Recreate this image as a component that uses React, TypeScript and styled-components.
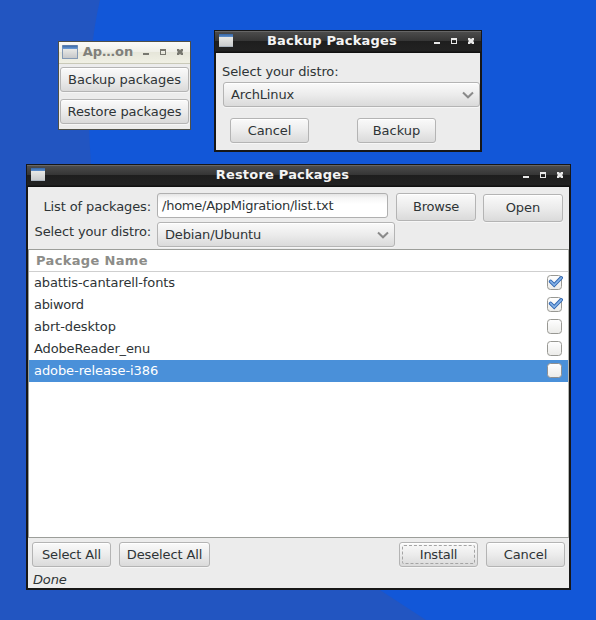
import React from "react";
import styled, { createGlobalStyle, css } from "styled-components";

const Global = createGlobalStyle`
  * { box-sizing: border-box; }
  html, body { margin: 0; padding: 0; }
  body { font-family: "DejaVu Sans", sans-serif; font-size: 13px; color: #2e3436; overflow: hidden; }
`;

const Desktop = styled.main`
  position: relative;
  width: 596px;
  height: 620px;
  overflow: hidden;
  background: #1257d8;
`;

const Wallpaper = styled.svg`
  display: block;
`;

const Window = styled.section<{ $x: number; $y: number; $w: number; $h: number; $light?: boolean }>`
  position: absolute;
  left: ${(p) => p.$x}px;
  top: ${(p) => p.$y}px;
  width: ${(p) => p.$w}px;
  height: ${(p) => p.$h}px;
  display: flex;
  flex-direction: column;
  background: #ececec;
  border: ${(p) => (p.$light ? "1px solid #4f5048" : "2px solid #171717")};
  border-top-width: 1px;
`;

const TitleBar = styled.header<{ $light?: boolean }>`
  display: flex;
  align-items: center;
  flex: none;
  ${(p) =>
    p.$light
      ? css`
          height: 22px;
          padding: 0 7px 1px 3px;
          color: #80807a;
          background: linear-gradient(#fbfbf8, #eeeee6 50%, #e6e6da 50%, #f0f0e4);
          border-bottom: 1px solid #c9c9b8;
        `
      : css`
          height: 22px;
          margin: 0 -1px;
          padding: 0 7px 2px 4px;
          color: #f4f4f4;
          background: linear-gradient(#666 0 1px, #4c4c4c 1px, #353535 10px, #1e1e1e 10px, #222 20px, #111 21px);
        `}
`;

const Title = styled.h1<{ $ls: number; $shift?: number }>`
  flex: 1;
  margin: 0;
  padding-right: ${(p) => p.$shift ?? 0}px;
  font-size: 13px;
  line-height: 20px;
  font-weight: bold;
  text-align: center;
  white-space: nowrap;
  letter-spacing: ${(p) => p.$ls}px;
`;

const Controls = styled.svg`
  flex: none;
  display: block;
`;

const AppGlyph = styled.svg`
  flex: none;
  display: block;
`;

const Button = styled.button<{ $w: number; $h?: number; $ls?: number; $focus?: boolean }>`
  flex: none;
  position: relative;
  width: ${(p) => p.$w}px;
  height: ${(p) => p.$h ?? 25}px;
  padding: 0;
  border: 1px solid #b4b4b4;
  border-radius: 3px;
  background: linear-gradient(#fafafa, #ececec 50%, #dadada);
  box-shadow: inset 0 1px 0 #fff, 0 1px 0 #f6f6f6;
  font: 13px/20px "DejaVu Sans", sans-serif;
  letter-spacing: ${(p) => p.$ls ?? 0}px;
  color: #2e3436;
  white-space: nowrap;
  ${(p) =>
    p.$focus &&
    css`
      &::after {
        content: "";
        position: absolute;
        inset: 2px;
        border: 1px dashed #a4a4a4;
        border-radius: 2px;
      }
    `}
`;

const Combo = styled(Button)`
  display: flex;
  align-items: center;
  justify-content: space-between;
  padding: 0 5px 0 7px;
`;

const Field = styled.div`
  width: 231px;
  height: 25px;
  padding: 0 4px;
  border: 1px solid #b0b0b0;
  border-radius: 3px;
  background: linear-gradient(#e4e4e4, #f6f6f6 4px, #fff 10px);
  line-height: 24px;
  white-space: nowrap;
  letter-spacing: -0.24px;
`;

const Label = styled.span`
  line-height: 20px;
  white-space: nowrap;
  letter-spacing: -0.12px;
`;

const LauncherBody = styled.div`
  display: flex;
  flex-direction: column;
  gap: 7px;
  padding: 3px 1px 0;
`;

const BackupBody = styled.div`
  display: flex;
  flex-direction: column;
  padding: 9px 0 0 6px;
`;

const BackupActions = styled.div`
  display: flex;
  gap: 48px;
  padding: 11px 0 0 8px;
`;

const ComboSlot = styled.div`
  padding-left: 1px;
`;

const Form = styled.div`
  display: grid;
  flex: none;
  height: 62px;
  grid-template-columns: 129px 239px 87px 80px;
  grid-template-rows: 29px 25px;
  padding-top: 6px;
  align-items: start;
`;

const FormLabel = styled(Label)<{ $top: number }>`
  text-align: right;
  padding: ${(p) => p.$top}px 6px 0 0;
`;

const Cell = styled.div<{ $top?: number }>`
  padding-top: ${(p) => p.$top ?? 0}px;
`;

const List = styled.div`
  flex: none;
  height: 289px;
  border: 1px solid #9c9e9a;
  border-right-color: #b4b6b2;
  background: #fff;
`;

const ListHeader = styled.div`
  height: 22px;
  padding-left: 7px;
  border-bottom: 1px solid #cfcfcf;
  line-height: 22px;
  font-weight: bold;
  letter-spacing: 0.34px;
  color: #8c8c88;
`;

const Row = styled.div<{ $selected?: boolean }>`
  display: flex;
  align-items: center;
  justify-content: space-between;
  height: 22px;
  padding: 0 5px 2px;
  color: ${(p) => (p.$selected ? "#fff" : "#2e3436")};
  background: ${(p) => (p.$selected ? "#4a90d9" : "#fff")};
`;

const RowText = styled.span<{ $ls: number }>`
  line-height: 20px;
  padding-top: 2px;
  letter-spacing: ${(p) => p.$ls}px;
`;

const Check = styled.svg`
  display: block;
`;

const Footer = styled.div`
  display: flex;
  flex: none;
  padding: 4px 4px 0;
`;

const Spacer = styled.div<{ $w?: number }>`
  ${(p) => (p.$w ? `width: ${p.$w}px;` : "flex: 1;")}
`;

const Status = styled.div`
  padding: 1px 0 0 5px;
  line-height: 24px;
  font-style: italic;
  letter-spacing: -0.15px;
`;

function WindowIcon({ large }: { large?: boolean }) {
  return (
    <AppGlyph width="16" height="16" viewBox="0 0 16 16">
      <defs>
        <linearGradient id="pane" x1="0" y1="0" x2="0" y2="1">
          <stop offset="0" stopColor="#e9e9e6" />
          <stop offset="1" stopColor="#c6c8ca" />
        </linearGradient>
        <linearGradient id="bar" x1="0" y1="0" x2="0" y2="1">
          <stop offset="0" stopColor="#3464a4" />
          <stop offset="1" stopColor="#6f9fd8" />
        </linearGradient>
      </defs>
      {large ? (
        <>
          <rect x="0" y="1" width="16" height="14" rx="0.5" fill="#8499b4" />
          <rect x="0.500" y="1.500" width="15" height="3.500" fill="url(#bar)" />
          <rect x="1" y="5" width="14" height="9" fill="url(#pane)" />
        </>
      ) : (
        <>
          <rect x="0" y="1" width="14" height="4" fill="url(#bar)" />
          <rect x="0" y="4" width="14" height="10" fill="url(#pane)" />
          <rect x="0" y="13" width="14" height="1" fill="#aab3bd" />
        </>
      )}
    </AppGlyph>
  );
}

function WindowControls({ color }: { color: string }) {
  return (
    <Controls width="40" height="10" viewBox="0 0 40 10" fill={color}>
      <rect x="0" y="6" width="6" height="2" />
      <path fillRule="evenodd" d="M17 2h6v6h-6zM18 4v3h4v-3z" />
      <path d="M34 2h2l1 1.2L38 2h2v2l-1 1 1 1v2h-2l-1-1.200L36 8h-2V6l1-1-1-1z" />
    </Controls>
  );
}

function Chevron() {
  return (
    <svg width="12" height="8" viewBox="0 0 12 8">
      <path d="M1 1.500L6 6.300l5-4.800" fill="none" stroke="#8a8a8a" strokeWidth="2" />
    </svg>
  );
}

function CheckBox({ checked, selected }: { checked?: boolean; selected?: boolean }) {
  return (
    <Check width="17" height="17" viewBox="0 0 17 17">
      <defs>
        <linearGradient id="box" x1="0" y1="0" x2="0" y2="1">
          <stop offset="0" stopColor="#fff" />
          <stop offset="1" stopColor="#ebebe9" />
        </linearGradient>
      </defs>
      <rect x="1.500" y="1.500" width="14" height="14" rx="3" fill="url(#box)" stroke={selected ? "#8d8f91" : "#989893"} />
      {checked && (
        <>
          <path d="M4.600 7.400l3.600 3.600L15.200 3.800" fill="none" stroke="#2f65b0" strokeWidth="3.600" strokeLinejoin="miter" strokeLinecap="round" />
          <path d="M4.600 7.400l3.600 3.600L15.200 3.800" fill="none" stroke="#84b2e8" strokeWidth="1.700" strokeLinejoin="miter" strokeLinecap="round" />
        </>
      )}
    </Check>
  );
}

const packages = [
  { name: "abattis-cantarell-fonts", checked: true, ls: -0.11 },
  { name: "abiword", checked: true, ls: -0.3 },
  { name: "abrt-desktop", ls: -0.12 },
  { name: "AdobeReader_enu", ls: -0.14 },
  { name: "adobe-release-i386", ls: -0.08, selected: true },
];

export default function App() {
  return (
    <Desktop>
      <Global />
      <Wallpaper width="596" height="620" viewBox="0 0 596 620">
        <path d="M0 0H100C88 52 87 108 91 164C120 370 220 500 380 590L426 620H0Z" fill="#2255c1" />
      </Wallpaper>

      <Window $x={58} $y={41} $w={133} $h={89} $light>
        <TitleBar $light>
          <WindowIcon large />
          <Title $ls={0} $shift={5}>Ap…on</Title>
          <WindowControls color="#77776f" />
        </TitleBar>
        <LauncherBody>
          <Button $w={129} $ls={-0.04}>Backup packages</Button>
          <Button $w={129} $ls={-0.08}>Restore packages</Button>
        </LauncherBody>
      </Window>

      <Window $x={214} $y={30} $w={268} $h={122}>
        <TitleBar>
          <WindowIcon />
          <Title $ls={0.2} $shift={5}>Backup Packages</Title>
          <WindowControls color="#e8e8e8" />
        </TitleBar>
        <BackupBody>
          <Label>Select your distro:</Label>
          <ComboSlot>
            <Combo $w={257} $ls={-0.15}>
              ArchLinux
              <Chevron />
            </Combo>
          </ComboSlot>
          <BackupActions>
            <Button $w={79} $ls={-0.08}>Cancel</Button>
            <Button $w={79}>Backup</Button>
          </BackupActions>
        </BackupBody>
      </Window>

      <Window $x={26} $y={164} $w={545} $h={426}>
        <TitleBar>
          <WindowIcon />
          <Title $ls={0.2} $shift={5}>Restore Packages</Title>
          <WindowControls color="#e8e8e8" />
        </TitleBar>
        <Form>
          <FormLabel $top={4}>List of packages:</FormLabel>
          <Field>/home/AppMigration/list.txt</Field>
          <Button $w={80} $h={28} $ls={-0.25}>Browse</Button>
          <Cell $top={1}>
            <Button $w={80} $h={28}>Open</Button>
          </Cell>
          <FormLabel $top={0}>Select your distro:</FormLabel>
          <Combo $w={238} $ls={-0.15}>
            Debian/Ubuntu
            <Chevron />
          </Combo>
        </Form>
        <List>
          <ListHeader>Package Name</ListHeader>
          {packages.map((p) => (
            <Row key={p.name} $selected={p.selected}>
              <RowText $ls={p.ls}>{p.name}</RowText>
              <CheckBox checked={p.checked} selected={p.selected} />
            </Row>
          ))}
        </List>
        <Footer>
          <Button $w={79} $ls={-0.12}>Select All</Button>
          <Spacer $w={8} />
          <Button $w={91} $ls={-0.12}>Deselect All</Button>
          <Spacer />
          <Button $w={79} $ls={-0.25} $focus>Install</Button>
          <Spacer $w={8} />
          <Button $w={79} $ls={-0.08}>Cancel</Button>
        </Footer>
        <Status>Done</Status>
      </Window>
    </Desktop>
  );
}
